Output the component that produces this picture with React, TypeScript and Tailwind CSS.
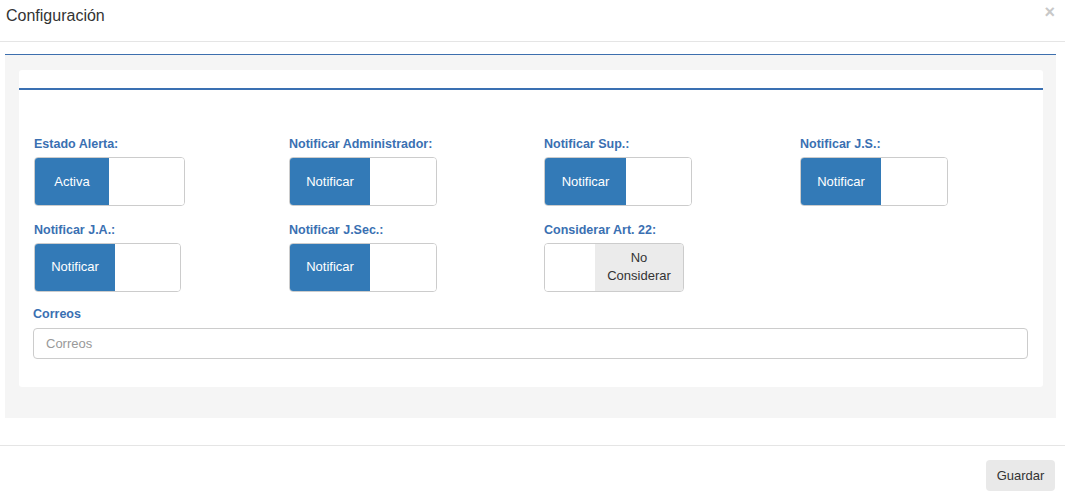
import React, { useState } from 'react'

type ToggleProps = {
  on: boolean
  onText: string
  offText: string
  width: string
  split: string
  onClick: () => void
}

// bootstrap-toggle style switch: blue "on" pane on the left, gray "off" pane on the right
const Toggle = ({ on, onText, offText, width, split, onClick }: ToggleProps) => {
  return (
    <div
      onClick={onClick}
      className={`${width} flex cursor-pointer overflow-hidden rounded-[4px] border border-[#ccc] bg-white text-[13px]`}
    >
      {on ? (
        <>
          <div className={`${split} flex items-center justify-center bg-[#337ab7] text-white`}>{onText}</div>
          <div className='flex-1 bg-white'></div>
        </>
      ) : (
        <>
          <div className={`${split} bg-white`}></div>
          <div className='flex flex-1 items-center justify-center bg-[#ebebeb] px-[12px] text-center leading-[18px] text-[#333]'>{offText}</div>
        </>
      )}
    </div>
  )
}

const App = () => {
  const [flags, setFlags] = useState<any>({
    estado: true,
    admin: true,
    sup: true,
    js: true,
    ja: true,
    jsec: true,
    art22: false,
  })
  const [correos, setCorreos] = useState('')

  const flip = (key: string) => setFlags((prev: any) => ({ ...prev, [key]: !prev[key] }))

  const label = 'block text-[12.5px] font-bold text-[#3a70b2] mb-[3px]'
  const cols = 'grid grid-cols-[255px_255px_256px_1fr]'

  return (
    <div className="w-[1065px] h-[497px] bg-white text-[#333]" style={{ fontFamily: '"Liberation Sans", Arial, sans-serif' }}>
      {/* header */}
      <div className='flex h-[42px] items-start justify-between border-b border-[#e5e5e5] pl-[6px] pr-[10px] pt-[6px]'>
        <h4 className='text-[16px] leading-[20px]'>Configuración</h4>
        <button className='text-[18px] font-bold leading-[12px] text-[#c8c8c8]'>×</button>
      </div>

      {/* body */}
      <div className='pl-[5px] pr-[9px] pt-[12px]'>
        <div className='h-[364px] border-t border-[#3d6fae] bg-[#f5f5f5] pl-[14px] pr-[13px] pt-[15px]'>
          <div className='h-[317px] rounded-[3px] bg-white pt-[18px]'>
            <div className='h-[2px] bg-[#3a70b2]'></div>

            <div className={`${cols} pt-[45px] pl-[15px]`}>
              <div>
                <label className={label}>Estado Alerta:</label>
                <Toggle on={flags.estado} onText='Activa' offText='Inactiva' width='w-[151px] h-[49px]' split='w-[74px]' onClick={() => flip('estado')} />
              </div>
              <div>
                <label className={label}>Notificar Administrador:</label>
                <Toggle on={flags.admin} onText='Notificar' offText='No Notificar' width='w-[148px] h-[49px]' split='w-[80px]' onClick={() => flip('admin')} />
              </div>
              <div>
                <label className={label}>Notificar Sup.:</label>
                <Toggle on={flags.sup} onText='Notificar' offText='No Notificar' width='w-[148px] h-[49px]' split='w-[81px]' onClick={() => flip('sup')} />
              </div>
              <div>
                <label className={label}>Notificar J.S.:</label>
                <Toggle on={flags.js} onText='Notificar' offText='No Notificar' width='w-[148px] h-[49px]' split='w-[80px]' onClick={() => flip('js')} />
              </div>
            </div>

            <div className={`${cols} pt-[15px] pl-[15px]`}>
              <div>
                <label className={label}>Notificar J.A.:</label>
                <Toggle on={flags.ja} onText='Notificar' offText='No Notificar' width='w-[147px] h-[49px]' split='w-[80px]' onClick={() => flip('ja')} />
              </div>
              <div>
                <label className={label}>Notificar J.Sec.:</label>
                <Toggle on={flags.jsec} onText='Notificar' offText='No Notificar' width='w-[148px] h-[49px]' split='w-[80px]' onClick={() => flip('jsec')} />
              </div>
              <div>
                <label className={label}>Considerar Art. 22:</label>
                <Toggle on={flags.art22} onText='Considerar' offText='No Considerar' width='w-[140px] h-[49px]' split='w-[50px]' onClick={() => flip('art22')} />
              </div>
            </div>

            <div className='px-[14px] pt-[13px]'>
              <label className={label}>Correos</label>
              <input
                value={correos}
                onChange={(e: any) => setCorreos(e.target.value)}
                placeholder='Correos'
                className='mt-[2px] h-[31px] w-[995px] rounded-[4px] border border-[#ccc] px-[12px] text-[13px] text-[#555] placeholder:text-[#999] focus:outline-none'
              />
            </div>
          </div>
        </div>
      </div>

      {/* footer */}
      <div className='mt-[27px] flex justify-end border-t border-[#e5e5e5] pr-[10px] pt-[14px]'>
        <button className='h-[31px] w-[69px] rounded-[4px] bg-[#e9e9e9] text-[13px] text-[#333]'>Guardar</button>
      </div>
    </div>
  )
}

export default App
